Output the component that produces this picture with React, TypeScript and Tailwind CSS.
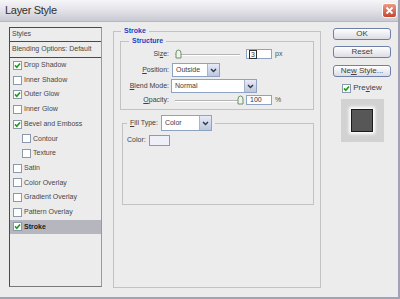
import React from "react";

const font = "font-['Liberation_Sans',Arial,sans-serif]";

const Check: React.FC<{ checked?: boolean }> = ({ checked }) => (
  <span className="w-[9px] h-[9px] border border-[#8c98ac] bg-white flex items-center justify-center shrink-0">
    {checked && (
      <svg width="7" height="7" viewBox="0 0 7 7">
        <path d="M1 3.4 L2.8 5.3 L6 1.4" stroke="#1f9a1f" strokeWidth="1.6" fill="none" />
      </svg>
    )}
  </span>
);

const Arrow = () => (
  <span className="w-[12px] h-full border-l border-[#a8b4cc] bg-gradient-to-b from-[#e6ebf6] to-[#bcc6de] flex items-center justify-center">
    <svg width="7" height="5" viewBox="0 0 7 5">
      <path d="M1 1 L3.5 3.6 L6 1" stroke="#303848" strokeWidth="1.4" fill="none" />
    </svg>
  </span>
);

const Select: React.FC<{ value: string; w: string; h: string }> = ({ value, w, h }) => (
  <div className={`${w} ${h} bg-white border border-[#8ea2c2] flex items-stretch`}>
    <span className="flex-1 pl-[3px] flex items-center text-[7px] text-[#404040]">{value}</span>
    <Arrow />
  </div>
);

const Slider: React.FC<{ pos: number }> = ({ pos }) => (
  <div className="relative w-[71px] h-[10px] ml-[1px]">
    <div className="absolute left-[2px] top-[5px] w-[65px] h-[2px] border-t border-[#b4b4b4] border-b border-b-white" />
    <svg className="absolute top-0" style={{ left: pos }} width="7" height="10" viewBox="0 0 7 10">
      <path d="M1 9 V4 Q1 1 3.5 1 Q6 1 6 4 V9 Z" fill="#eef4e8" stroke="#6f8f6f" strokeWidth="1" />
    </svg>
  </div>
);

const Field: React.FC<{ children: React.ReactNode }> = ({ children }) => (
  <div className="w-[26px] h-[10px] bg-white border border-[#8ea2c2] flex items-center pl-[3px] text-[7px] text-[#303030]">
    {children}
  </div>
);

const Label: React.FC<{ children: React.ReactNode }> = ({ children }) => (
  <span className="w-[49px] text-right text-[7px] text-[#404040] pr-[1px]">{children}</span>
);

const Btn: React.FC<{ children: React.ReactNode; mt: string }> = ({ children, mt }) => (
  <div
    className={`${mt} w-[58px] h-[12px] rounded-[3px] border border-[#6e80a8] bg-gradient-to-b from-white to-[#dcdce4] flex items-center justify-center text-[8px] text-[#404040]`}
  >
    <span>{children}</span>
  </div>
);

const rows: { name: string; checked?: boolean; indent?: boolean }[] = [
  { name: "Drop Shadow", checked: true },
  { name: "Inner Shadow" },
  { name: "Outer Glow", checked: true },
  { name: "Inner Glow" },
  { name: "Bevel and Emboss", checked: true },
  { name: "Contour", indent: true },
  { name: "Texture", indent: true },
  { name: "Satin" },
  { name: "Color Overlay" },
  { name: "Gradient Overlay" },
  { name: "Pattern Overlay" },
];

export default function App() {
  return (
    <div className={`${font} w-[400px] h-[299px] flex flex-col bg-[#ececec] border-r-2 border-b-2 border-[#a2a2b4] overflow-hidden`}>
      <div className="h-[22px] shrink-0 flex items-center justify-between pl-[5px] pr-[1px] bg-gradient-to-b from-[#f6f6f8] via-[#e2e2e8] to-[#c9c9d2] border-b border-[#b8b8c4]">
        <span className="text-[11px] tracking-[-0.3px] text-[#303030]">Layer Style</span>
        <span className="w-[15px] h-[15px] rounded-[3px] border border-white bg-gradient-to-b from-[#eb9a86] to-[#c7432f] flex items-center justify-center">
          <svg width="9" height="9" viewBox="0 0 9 9">
            <path d="M1.5 1.5 L7.5 7.5 M7.5 1.5 L1.5 7.5" stroke="white" strokeWidth="1.8" />
          </svg>
        </span>
      </div>

      <div className="flex flex-1">
        {/* styles list */}
        <div className="ml-[9px] mt-[5px] w-[93px] h-[260px] border border-[#4a4a4a] border-r-[#9a9a9a] border-b-[#7a7a7a] flex flex-col text-[7px] text-[#484848]">
          <div className="h-[14px] flex items-center pl-[2px] border-b border-[#4a4a4a]">Styles</div>
          <div className="h-[16px] flex items-center pl-[2px] border-b border-[#4a4a4a]">Blending Options: Default</div>
          {rows.map((r) => (
            <div key={r.name} className={`h-[14.7px] flex items-center gap-[2px] ${r.indent ? "pl-[12px]" : "pl-[3px]"}`}>
              <Check checked={r.checked} />
              <span>{r.name}</span>
            </div>
          ))}
          <div className="h-[14.7px] flex items-center gap-[2px] pl-[3px] bg-[#b6b6be] font-bold text-[#202020]">
            <Check checked />
            <span>Stroke</span>
          </div>
        </div>

        {/* stroke panel */}
        <fieldset className="ml-[11px] mt-[4px] w-[208px] h-[262px] border border-[#c2c2c2] px-[6px]">
          <legend className="ml-[1px] px-[3px] text-[7px] leading-[10px] font-bold text-[#1e3fc2]">Stroke</legend>
          <fieldset className="border border-[#c2c2c2] pb-[4px]">
            <legend className="ml-[8px] px-[3px] text-[7px] leading-[10px] font-bold text-[#1e3fc2]">Structure</legend>
            <div className="mt-[3px] h-[10px] flex items-center gap-[2px]">
              <Label>
                Si<span className="underline">z</span>e:
              </Label>
              <Slider pos={2} />
              <Field>
                <span className="outline outline-1 outline-[#303030] px-[1px] leading-[7px]">3</span>
              </Field>
              <span className="text-[7px] text-[#505050] ml-[1px]">px</span>
            </div>
            <div className="mt-[4px] h-[14px] flex items-center gap-[2px]">
              <Label>
                <span className="underline">P</span>osition:
              </Label>
              <Select value="Outside" w="w-[48px]" h="h-[14px]" />
            </div>
            <div className="mt-[2px] h-[14px] flex items-center gap-[1px]">
              <Label>
                <span className="underline">B</span>lend Mode:
              </Label>
              <Select value="Normal" w="w-[86px]" h="h-[14px]" />
            </div>
            <div className="mt-[2px] h-[10px] flex items-center gap-[2px]">
              <Label>
                <span className="underline">O</span>pacity:
              </Label>
              <Slider pos={64} />
              <Field>100</Field>
              <span className="text-[7px] text-[#505050] ml-[1px]">%</span>
            </div>
          </fieldset>

          <fieldset className="ml-[2px] mt-[5px] h-[90px] border border-[#c2c2c2]">
            <legend className="ml-[4px] px-[3px] flex items-center gap-[3px] text-[7px] text-[#404040]">
              <span>
                <span className="underline">F</span>ill Type:
              </span>
              <Select value="Color" w="w-[51px]" h="h-[16px]" />
            </legend>
            <div className="mt-[4px] pl-[4px] flex items-center gap-[3px] text-[7px] text-[#404040]">
              <span>Color:</span>
              <span className="w-[21px] h-[11px] bg-[#efeffa] border border-[#9696a6]" />
            </div>
          </fieldset>
        </fieldset>

        {/* buttons */}
        <div className="ml-[12px] w-[58px] flex flex-col items-center">
          <Btn mt="mt-[6px]">OK</Btn>
          <Btn mt="mt-[6px]">Reset</Btn>
          <Btn mt="mt-[7px]">
            Ne<span className="underline">w</span> Style...
          </Btn>
          <div className="mt-[5px] flex items-center gap-[2px] text-[8px] text-[#404040]">
            <Check checked />
            <span>
              Pre<span className="underline">v</span>iew
            </span>
          </div>
          <div className="mt-[5px] w-[43px] h-[43px] bg-[#d2d2d2] flex items-center justify-center">
            <div className="w-[22px] h-[23px] bg-[#575757] border border-[#1a1a1a] shadow-[0_0_3px_2px_#ffffff]" />
          </div>
        </div>
      </div>
    </div>
  );
}
